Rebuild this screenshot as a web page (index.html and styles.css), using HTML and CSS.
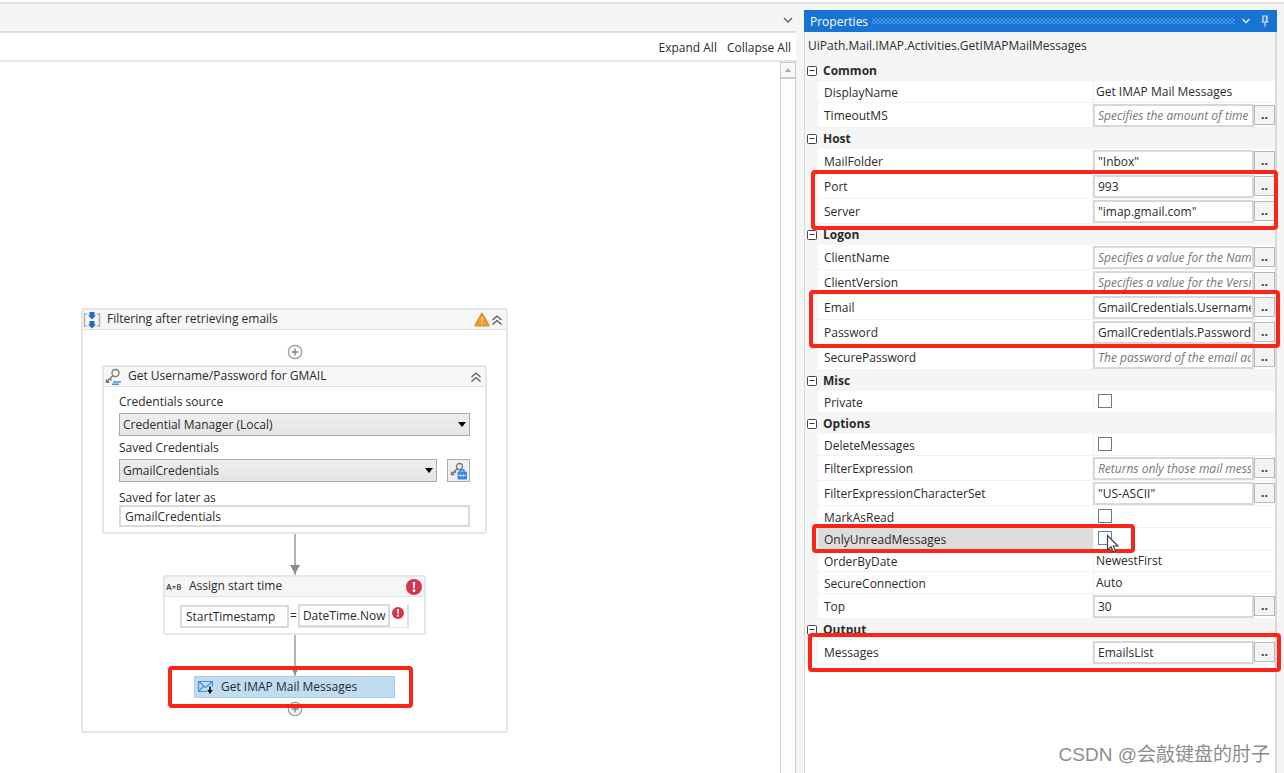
FILE: index.html
```html
<!DOCTYPE html>
<html lang="en">
<head>
<meta charset="utf-8">
<title>Workflow designer</title>
<link rel="stylesheet" href="styles.css">
</head>
<body>
<svg class="defs" aria-hidden="true">
  <symbol id="chevrons" viewBox="0 0 12 12"><path d="M1.500 6 6 2l4.500 4M1.500 10.500 6 6.500l4.500 4" fill="none" stroke="#555" stroke-width="1.300"/></symbol>
  <symbol id="plus" viewBox="0 0 16 16"><circle cx="8" cy="8" r="6.700" fill="#fff" stroke="#999" stroke-width="1.200"/><path d="M8 4.500v7M4.500 8h7" stroke="#888" stroke-width="1.500"/></symbol>
  <symbol id="error" viewBox="0 0 16 16"><circle cx="8" cy="8" r="8" fill="#d6364c"/><path d="M6.700 3h2.600l-.5 6.200H7.200z" fill="#fff"/><circle cx="8" cy="11.700" r="1.400" fill="#fff"/></symbol>
  <symbol id="minus" viewBox="0 0 10 10"><rect x=".5" y=".5" width="9" height="9" rx="1" fill="#fff" stroke="#444"/><path d="M2.500 4.500h5" stroke="#333"/></symbol>
</svg>

<div class="app">
  <main class="designer">
    <div class="tabstrip">
      <button class="icon-btn" aria-label="Open tab list"><svg width="10" height="6" viewBox="0 0 10 6"><path d="m1 1 4 4 4-4" fill="none" stroke="#666" stroke-width="1.500"/></svg></button>
    </div>
    <div class="toolbar">
      <button class="text-btn">Expand All</button>
      <button class="text-btn">Collapse All</button>
    </div>
    <div class="workspace">
      <div class="canvas">
        <section class="card sequence">
          <header class="card-head">
            <svg class="head-icon" width="18" height="18" viewBox="0 0 18 18"><path d="M4 3H1.500v12H4M14 3h2.500v12H14" fill="none" stroke="#aaa" stroke-width="1.300"/><path d="M6.500 1h5v3.500H13L9 8.500 5 4.500h1.500zM6.500 10h5v3.500H13l-4 4-4-4h1.500z" fill="#1e6fc4"/></svg>
            <span class="card-title">Filtering after retrieving emails</span>
            <svg width="16" height="15" viewBox="0 0 16 15"><path d="M8 1.500 14.800 13.500H1.200z" fill="#eda02c" stroke="#e0952a" stroke-width="1.800" stroke-linejoin="round"/><path d="M8 5v5M8 11v1.500" stroke="#fbe3b0" stroke-width="1.200"/></svg>
            <button class="icon-btn" aria-label="Collapse sequence"><svg width="12" height="12"><use href="#chevrons"/></svg></button>
          </header>
          <div class="flow">
            <button class="icon-btn" aria-label="Add first activity"><svg width="16" height="16"><use href="#plus"/></svg></button>

            <section class="card credentials">
              <header class="card-head">
                <svg class="head-icon" width="18" height="18" viewBox="0 0 18 18"><circle cx="10.500" cy="5" r="3.500" fill="none" stroke="#777" stroke-width="1.300"/><path d="M8 7.500 2 13.500M1.500 11.500v2.800h3M4.500 10.500l2 2" fill="none" stroke="#777" stroke-width="1.400"/><path d="M8 14h8M7 16.300h7" stroke="#4b8fe0" stroke-width="1.600"/></svg>
                <span class="card-title">Get Username/Password for GMAIL</span>
                <button class="icon-btn" aria-label="Collapse credentials"><svg width="12" height="12"><use href="#chevrons"/></svg></button>
              </header>
              <div class="form">
                <label for="source">Credentials source</label>
                <div class="combo">
                  <select id="source"><option>Credential Manager (Local)</option></select>
                  <svg width="8" height="5" viewBox="0 0 8 5"><path d="M0 0h8L4 5z"/></svg>
                </div>
                <label for="saved">Saved Credentials</label>
                <div class="form-line">
                  <div class="combo">
                    <select id="saved"><option>GmailCredentials</option></select>
                    <svg width="8" height="5" viewBox="0 0 8 5"><path d="M0 0h8L4 5z"/></svg>
                  </div>
                  <button class="key-btn" aria-label="Add credentials"><svg width="18" height="18" viewBox="0 0 18 18"><circle cx="9.500" cy="4.500" r="3" fill="none" stroke="#777" stroke-width="1.300"/><path d="M7.500 6.500 2 12M1.500 9.500v3h3M4 8.500l2 2" fill="none" stroke="#777" stroke-width="1.400"/><path d="M10 10V8h4v2" fill="none" stroke="#3c86e0" stroke-width="1.300"/><rect x="7.500" y="9.500" width="9.500" height="8" rx="1" fill="#3c86e0"/><path d="M8 13.500h8.500M10.500 12v3M13.500 12v3" stroke="#cfe2fa" stroke-width=".8"/></svg></button>
                </div>
                <label class="later" for="later">Saved for later as</label>
                <input id="later" class="field" type="text" value="GmailCredentials">
              </div>
            </section>

            <div class="connector"></div>

            <section class="card assign">
              <header class="card-head">
                <svg class="assign-icon" width="16" height="8" viewBox="0 0 16 8"><path d="M.7 7 2.700 1.500h.5L5.200 7M1.500 5.300h3M6.500 3.500h3M6.500 5h3M11.500 1.500v5h1.800q1.400-.2 1.400-1.300T13.300 4h-1.800M13.300 4q1-.2 1-1.200t-1-1.300h-1.800" fill="none" stroke="#555" stroke-width="1.200"/></svg>
                <span class="card-title">Assign start time</span>
                <svg width="16" height="16"><use href="#error"/></svg>
              </header>
              <div class="assign-body">
                <input class="field target" type="text" aria-label="Assign to" value="StartTimestamp">
                <span class="equals">=</span>
                <div class="value-box">
                  <input class="field" type="text" aria-label="Assign value" value="DateTime.Now">
                  <svg width="12" height="12"><use href="#error"/></svg>
                </div>
              </div>
            </section>

            <div class="connector"></div>

            <div class="node marked">
              <svg width="18" height="16" viewBox="0 0 18 16"><path d="M10 12.500H1.500v-10h14v5" fill="none" stroke="#4a8fc8" stroke-width="1.200"/><path d="m1.500 2.500 7 6 7-6M1.500 12.500l5-5" fill="none" stroke="#4a8fc8" stroke-width="1.200"/><path d="M13 7.500v4.500" stroke="#111" stroke-width="1.600"/><path d="M10.200 11h5.600L13 15z" fill="#111"/></svg>
              <span>Get IMAP Mail Messages</span>
            </div>
            <button class="icon-btn" aria-label="Add next activity"><svg width="16" height="16"><use href="#plus"/></svg></button>
          </div>
        </section>
      </div>
      <div class="scrollbar"><button class="scroll-up" aria-label="Scroll up"><svg width="6" height="4" viewBox="0 0 6 4"><path d="M0 4h6L3 0z" fill="#aaa"/></svg></button></div>
    </div>
  </main>

  <aside class="properties">
    <header class="panel-head">
      <h2>Properties</h2>
      <span class="grip"></span>
      <button class="icon-btn" aria-label="Panel menu"><svg width="10" height="6" viewBox="0 0 10 6"><path d="m1.500 1 3.500 3.500L8.500 1" fill="none" stroke="#cfe4fa" stroke-width="1.600"/></svg></button>
      <button class="icon-btn" aria-label="Pin panel"><svg width="8" height="12" viewBox="0 0 8 12"><path d="M2 7V1h4v6M.5 7h7M4 7v4.500" fill="none" stroke="#d6e8fb" stroke-width="1.200"/><path d="M5.300 1v6" stroke="#d6e8fb"/></svg></button>
    </header>
    <p class="type-name">UiPath.Mail.IMAP.Activities.GetIMAPMailMessages</p>

    <h3><svg width="10" height="10"><use href="#minus"/></svg>Common</h3>
    <div class="rows">
      <div class="row"><span class="name">DisplayName</span><span class="value">Get IMAP Mail Messages</span></div>
      <div class="row edit"><label class="name" for="timeout">TimeoutMS</label><input id="timeout" type="text" placeholder="Specifies the amount of time"><button>..</button></div>
    </div>

    <h3><svg width="10" height="10"><use href="#minus"/></svg>Host</h3>
    <div class="rows">
      <div class="row edit"><label class="name" for="folder">MailFolder</label><input id="folder" type="text" value="&quot;Inbox&quot;"><button>..</button></div>
      <div class="marked mark-host">
        <div class="row edit"><label class="name" for="port">Port</label><input id="port" type="text" value="993"><button>..</button></div>
        <div class="row edit"><label class="name" for="server">Server</label><input id="server" type="text" value="&quot;imap.gmail.com&quot;"><button>..</button></div>
      </div>
    </div>

    <h3><svg width="10" height="10"><use href="#minus"/></svg>Logon</h3>
    <div class="rows">
      <div class="row edit"><label class="name" for="cname">ClientName</label><input id="cname" type="text" placeholder="Specifies a value for the Name"><button>..</button></div>
      <div class="row edit"><label class="name" for="cver">ClientVersion</label><input id="cver" type="text" placeholder="Specifies a value for the Version"><button>..</button></div>
      <div class="marked mark-logon">
        <div class="row edit"><label class="name" for="email">Email</label><input id="email" type="text" value="GmailCredentials.Username"><button>..</button></div>
        <div class="row edit"><label class="name" for="pass">Password</label><input id="pass" type="text" value="GmailCredentials.Password"><button>..</button></div>
      </div>
      <div class="row edit"><label class="name" for="spass">SecurePassword</label><input id="spass" type="text" placeholder="The password of the email account"><button>..</button></div>
    </div>

    <h3><svg width="10" height="10"><use href="#minus"/></svg>Misc</h3>
    <div class="rows">
      <div class="row"><label class="name" for="private">Private</label><input id="private" type="checkbox"></div>
    </div>

    <h3><svg width="10" height="10"><use href="#minus"/></svg>Options</h3>
    <div class="rows">
      <div class="row"><label class="name" for="delete">DeleteMessages</label><input id="delete" type="checkbox"></div>
      <div class="row edit"><label class="name" for="filter">FilterExpression</label><input id="filter" type="text" placeholder="Returns only those mail messages"><button>..</button></div>
      <div class="row edit"><label class="name" for="charset">FilterExpressionCharacterSet</label><input id="charset" type="text" value="&quot;US-ASCII&quot;"><button>..</button></div>
      <div class="row"><label class="name" for="read">MarkAsRead</label><input id="read" type="checkbox"></div>
      <div class="row selected marked"><label class="name" for="unread">OnlyUnreadMessages</label><input id="unread" type="checkbox">
        <svg class="cursor" width="14" height="20" viewBox="0 0 14 20"><path d="M1.500 1.500v14.500l3.500-3.200 2.300 5 2.200-1-2.200-4.800h4.600z" fill="#fff" stroke="#444" stroke-width="1.200"/></svg>
      </div>
      <div class="row"><span class="name">OrderByDate</span><span class="value">NewestFirst</span></div>
      <div class="row"><span class="name">SecureConnection</span><span class="value">Auto</span></div>
      <div class="row edit"><label class="name" for="top">Top</label><input id="top" type="text" value="30"><button>..</button></div>
    </div>

    <h3><svg width="10" height="10"><use href="#minus"/></svg>Output</h3>
    <div class="rows">
      <div class="marked mark-output">
        <div class="row edit"><label class="name" for="messages">Messages</label><input id="messages" type="text" value="EmailsList"><button>..</button></div>
      </div>
    </div>
    <div class="rest"></div>
  </aside>
</div>
<div class="watermark">CSDN @会敲键盘的肘子</div>
</body>
</html>
```

FILE: styles.css
```css
* { box-sizing: border-box; }

body {
  margin: 0;
  background: #f5f5f6;
  color: #2b2b2b;
  font: 12px/16px "Open Sans", "Noto Sans", sans-serif;
}

button, input, select { font: inherit; color: inherit; margin: 0; }
button { padding: 0; }
svg { display: block; flex: none; }
.defs { position: absolute; width: 0; height: 0; }

.app {
  display: flex;
  gap: 8px;
  height: 100vh;
  padding-right: 7px;
  border-top: 2px solid #fafafa;
  overflow: hidden;
  box-shadow: inset 0 2px #e2e2e3;
}

.icon-btn, .text-btn { border: 0; background: none; }

/* Designer */
.designer { flex: 1; min-width: 0; display: flex; flex-direction: column; padding-top: 2px; }
.tabstrip {
  display: flex;
  justify-content: flex-end;
  align-items: center;
  height: 29px;
  padding: 4px 3px 0 0;
  border-bottom: 2px solid #dfdfe0;
}
.toolbar {
  display: flex;
  justify-content: flex-end;
  align-items: center;
  gap: 10px;
  height: 29px;
  padding: 2px 5px 0 0;
  background: #fff;
  border-bottom: 2px solid #e4e4e4;
}
.workspace { flex: 1; min-height: 0; display: flex; background: #fff; }
.canvas { flex: 1; padding: 246px 0 0 81px; overflow: hidden; }
.scrollbar { width: 16px; border: solid #ccc; border-width: 0 1px; background: #fdfdfd; }
.scroll-up {
  display: grid;
  place-items: center;
  width: 100%;
  height: 17px;
  border: solid #ccc;
  border-width: 1px 0 2px;
  background: #f8f8f8;
}

/* Activity cards */
.card { border: 2px solid #e6e6e6; border-radius: 2px; background: #fff; }
.card-head {
  display: flex;
  align-items: center;
  height: 20px;
  background: #f6f6f6;
  border-bottom: 1px solid #e0e0e0;
}
.card-title { flex: 1; padding: 0 0 2px 5px; }
.sequence { width: 427px; }
.sequence > .card-head { gap: 1px; padding-right: 3px; }
.flow { display: flex; flex-direction: column; align-items: center; padding: 14px 0; }
.credentials { width: 385px; margin-top: 5px; }
.credentials > .card-head { padding: 0 3px 0 1px; }
.form { display: flex; flex-direction: column; padding: 7px 15px 5px; }
.form label { line-height: 16px; margin-bottom: 3px; }
.form label.later { margin: 4px 0 0; line-height: 15px; }
.combo { position: relative; flex: 1; margin-bottom: 4px; }
.combo select {
  display: block;
  appearance: none;
  width: 100%;
  height: 23px;
  padding: 0 20px 0 3px;
  border: 1px solid #aaa;
  border-radius: 0;
  background: linear-gradient(#efefef, #e4e4e4);
}
.combo svg { position: absolute; right: 4px; top: 9px; pointer-events: none; }
.form-line { display: flex; gap: 10px; }
.key-btn {
  display: grid;
  place-items: center;
  width: 23px;
  height: 23px;
  border: 1px solid #aaa;
  background: #efefef;
}
.field {
  min-width: 0;
  height: 22px;
  padding: 0 4px;
  border: 2px solid #d9d9d9;
  background: #fff;
}

.connector {
  position: relative;
  width: 2px;
  height: 41px;
  background: #b4b4b4;
}
.connector::after {
  content: "";
  position: absolute;
  left: -4px;
  bottom: 1px;
  border: solid transparent;
  border-width: 9px 5px 0;
  border-top-color: #8c8c8c;
}

.assign { width: 263px; }
.assign > .card-head { padding: 0 2px 0 1px; }
.assign .card-title { padding-left: 7px; }
.assign-body { display: flex; align-items: center; padding: 7px 15px 5px; }
.assign-body .field { height: 23px; }
.assign-body .target { width: 109px; }
.equals { padding: 0 1px; }
.value-box { display: flex; flex: 1; gap: 2px; border-right: 2px solid #e0e0e0; border-bottom: 1px solid #e4e4e4; }
.value-box .field { width: 92px; padding: 0 1px 0 3px; }
.value-box svg { margin-top: 3px; }

.node {
  display: flex;
  align-items: center;
  gap: 6px;
  width: 201px;
  height: 22px;
  margin-bottom: 3px;
  padding-left: 2px;
  border: 1px solid #a9cde6;
  background: #bfdcf0;
}

/* Red call-out frames */
.marked { position: relative; z-index: 1; }
.marked::after {
  content: "";
  position: absolute;
  inset: -11px -19px -11px -27px;
  border: 4px solid #fa2418;
  border-radius: 4px;
  pointer-events: none;
}
.mark-host::after { inset: -4px -3px -6px -7px; }
.mark-logon::after { inset: -5px -5px -3px -9px; }
.mark-output::after { inset: -7px -6px -7px -10px; }
.selected::after { inset: -4px 140px -4px -6px; }

/* Properties panel */
.properties {
  flex: 0 0 473px;
  display: flex;
  flex-direction: column;
  margin-top: 8px;
  border: solid #d9d9da;
  border-width: 0 2px 0 1px;
}
.panel-head {
  display: flex;
  align-items: center;
  gap: 10px;
  height: 22px;
  margin: 0 -2px 0 -1px;
  padding: 0 8px 0 6px;
  background: #1874d2;
  color: #fff;
}
.panel-head h2 { margin: 0; padding-top: 2px; font: inherit; }
.grip {
  flex: 1;
  height: 6px;
  margin: 0 -4px 0 -6px;
  background: radial-gradient(#4b9bea 1px, transparent 1px) 0 0 / 4px 4px, radial-gradient(#4b9bea 1px, transparent 1px) 2px 2px / 4px 4px;
}
.type-name { margin: 0; padding: 6px 3px; }
.properties h3 {
  display: flex;
  align-items: center;
  gap: 6px;
  height: 21px;
  margin: 0;
  padding-left: 2px;
  font: bold 12px/16px "Open Sans", "Noto Sans", sans-serif;
}
.rows { padding-left: 13px; }
.row {
  display: flex;
  align-items: center;
  height: 22px;
  background: #fff;
  border-bottom: 1px solid #f3f3f4;
}
.edit { height: 25px; }
.name { flex: 1; align-self: stretch; display: flex; align-items: center; padding: 2px 0 0 6px; border-right: 1px solid #f3f3f4; }
.value { width: 181px; padding-left: 2px; }
.row input[type="text"] {
  width: 161px;
  height: 23px;
  padding: 0 1px 0 3px;
  border: 2px solid #d8d8da;
  border-radius: 0;
  background: #fff;
}
.row input::placeholder { color: #777; font-style: italic; opacity: 1; }
.row button {
  width: 21px;
  height: 20px;
  border: 1px solid #b8b8bb;
  background: #f3f3f4;
  font-weight: bold;
  line-height: 16px;
}
.row input[type="checkbox"] {
  appearance: none;
  width: 14px;
  height: 14px;
  margin: 0 163px 2px 4px;
  border: 1px solid #777;
  background: #fff;
}
.selected .name { background: #dcdcdc; }
.row.selected input { border-color: #4b82d0; }
.cursor { position: absolute; right: 155px; top: 6px; z-index: 2; }
.rest { flex: 1; background: #fff; }

.watermark {
  position: absolute;
  right: 14px;
  bottom: 5px;
  z-index: 3;
  color: #8d8d90;
  font: 19px/26px "Liberation Sans", "Noto Sans CJK SC", sans-serif;
}
```
